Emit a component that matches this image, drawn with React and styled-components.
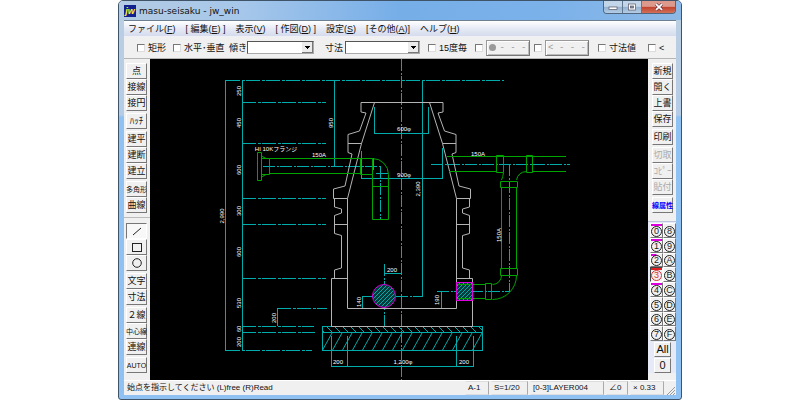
import React, { useState } from "react";
import styled, { createGlobalStyle, css } from "styled-components";

const leftTools = [
    [
        [{ label: "点" }, { label: "接線" }, { label: "接円" }],
        [{ label: "ﾊｯﾁ" }],
        [{ label: "建平" }, { label: "建断" }, { label: "建立" }],
        [{ label: "多角形", small: true }, { label: "曲線" }],
    ],
    [
        [{ label: "線", icon: "line" }, { label: "矩形", icon: "rect" }, { label: "円", icon: "circle" }],
        [{ label: "文字" }, { label: "寸法" }],
        [{ label: "２線" }, { label: "中心線", small: true }, { label: "連線" }],
        [{ label: "AUTO", small: true }],
    ],
];

const rightTools = [
    [{ label: "新規" }, { label: "開く" }, { label: "上書" }, { label: "保存" }],
    [{ label: "印刷" }],
    [{ label: "切取", off: true }, { label: "ｺﾋﾟｰ", off: true }, { label: "貼付", off: true }],
    [{ label: "線属性", small: true, accent: true }],
];

const layers = ["0", "8", "1", "9", "2", "A", "3", "B", "4", "C", "5", "D", "6", "E", "7", "F"];
const layerBars = { 0: "100%", 1: "100%", 2: "50%", 3: "100%", 4: "100%" };

const menus = [
    ["ファイル(", "F", ")"],
    ["[ 編集(", "E", ") ]"],
    ["表示(", "V", ")"],
    ["[ 作図(", "D", ") ]"],
    ["設定(", "S", ")"],
    ["[その他(", "A", ")]"],
    ["ヘルプ(", "H", ")"],
];

const ToolIcon = ({ name }) => (
    <svg width="12" height="12" viewBox="0 0 12 12" fill="none" stroke="#222">
        {name === "line" && <path d="M2 10 10 3" />}
        {name === "rect" && <rect x="1.5" y="2.5" width="9" height="8" />}
        {name === "circle" && <circle cx="6" cy="6" r="4.3" />}
    </svg>
);

const ToolGroups = ({ groups, active, onPick }) => (
    <Groups>
        {groups.map((group, i) => (
            <div key={i}>
                {group.map((t) => (
                    <Tool
                        key={t.label}
                        aria-label={t.label}
                        disabled={t.off}
                        $small={t.small}
                        $accent={t.accent}
                        $active={t.icon && active === t.icon}
                        onClick={() => t.icon && onPick(t.icon)}
                    >
                        {t.icon ? <ToolIcon name={t.icon} /> : t.label}
                    </Tool>
                ))}
            </div>
        ))}
    </Groups>
);

const Combo = ({ id, label, width, labelWidth }) => (
    <>
        <ComboLabel htmlFor={id} $width={labelWidth}>{label}</ComboLabel>
        <ComboBox $width={width}>
            <select id={id}><option></option></select>
            <svg width="11" height="11" viewBox="0 0 11 11" shapeRendering="crispEdges">
                <rect width="11" height="11" fill="#ececec" />
                <path d="M0 10.5H10.5V0" fill="none" stroke="#777" />
                <path d="M3 4h5L5.5 7z" fill="#000" />
            </svg>
        </ComboBox>
    </>
);

// one half of the manhole wall, the other one is mirrored on the centre line
const WALL = [
    "M402 102.5H361V112L366 113 359.5 131 348 134.5V152.5L352 154 345 186 333.5 189V198.5H347.5",
    "M348 143.5H361.5",
    "M374.5 102.5 361.5 143.5 347.5 198.5V308.5H402",
    "M334.5 198.5V207L341.5 209V213L334.5 215.5V233.5L341.5 235.5V268L334.5 270V278.5",
    "M334.5 224.5H347.5M331.5 278.5H347.5M331.5 278.5V326.5H402",
].join("");

// [x, y, text, vertical]
const notes = [
    [241, 91, "250", true],
    [241, 123, "450", true],
    [241, 170, "600", true],
    [241, 211, "300", true],
    [241, 252, "600", true],
    [241, 303, "530", true],
    [241, 329, "60", true],
    [241, 342, "200", true],
    [224, 216, "2,990", true],
    [333, 123, "950", true],
    [276, 318, "200", true],
    [420, 189, "2,390", true],
    [361, 302, "140", true],
    [439, 300, "190", true],
    [501, 235, "150A", true],
    [404, 131, "600φ"],
    [404, 177, "900φ"],
    [276, 151, "HI 10Kフランジ"],
    [319, 157, "150A"],
    [478, 156, "150A"],
    [392, 272, "200"],
    [338, 364, "200"],
    [403, 364, "1,200φ"],
    [464, 364, "200"],
];

const range = (from, to, step) => {
    const out = [];
    for (let v = from; v < to; v += step) out.push(v);
    return out;
};

const Drawing = () => (
    <svg viewBox="150 59 498 321" role="img" aria-label="masu-seisaku">
        <defs>
            <clipPath id="inlet"><circle cx="384" cy="296" r="11" /></clipPath>
            <clipPath id="outlet"><rect x="457" y="283" width="16" height="17" /></clipPath>
            <clipPath id="base"><rect x="323" y="327" width="160" height="24" /></clipPath>
        </defs>

        <g fill="none" stroke="#00acac">
            <g shapeRendering="crispEdges">
                <path d="M225.5 80V350.5M242.5 80V350.5M334.5 80V166M422.5 80V296M277.5 308V326" />
                <path d="M374.5 107V133.5H428.5V107M361.5 151V178.5H442.5V148" />
                <path d="M384 273.5H401M362.5 296V308M441.5 291V308" />
                <path d="M331.5 336V366.5H473V336M347.5 336V366M456.5 336V366" />
                <path d="M322.5 326.5H482.5V350.5H322.5ZM322.5 332.5H482.5" />
                <path
                    strokeDasharray="14 2 3 1"
                    d="M226 80.5H504M242 102.5H326M242 143.5H326M242 198.5H326M242 224.5H326M242 278.5H326M277 308.5H327M242 326.5H314M242 332.5H315M226 350.5H312"
                />
                <path
                    strokeDasharray="12 2 2 1"
                    d="M401.5 59V380M263 166.5H381M380.5 166V219M373.5 158V170M376 173.5H389M384.5 264V326M362 296.5H423M437 291.5H510M509.5 164V292M431 164.5H570"
                />
            </g>
            <g clipPath="url(#base)">
                {range(318, 484, 8).map((x) => <path key={x} d={`M${x} 326l7 7`} />)}
                {range(322, 490, 10).map((x) => <path key={x} d={`M${x} 351l10-18`} />)}
            </g>
            <g clipPath="url(#inlet)">
                <rect x="372" y="284" width="24" height="24" fill="#003c3c" stroke="none" />
                {range(348, 396, 4).map((x) => <path key={x} d={`M${x} 308l24-24`} />)}
            </g>
            <g clipPath="url(#outlet)">
                <rect x="457" y="283" width="16" height="17" fill="#003c3c" stroke="none" />
                {range(438, 474, 4).map((x) => <path key={x} d={`M${x} 301l18-18`} />)}
            </g>
        </g>

        <g fill="none" stroke="#b4b4b4">
            <path d={WALL} />
            <path d={WALL} transform="translate(804 0) scale(-1 1)" />
        </g>

        <g fill="none" stroke="#00a400">
            <path d="M257.5 152.5H261.5V180.5H257.5ZM261.5 156 266 158.5M261.5 177 266 174.5M261.5 158.5H269.5V174.5H261.5" />
            <path d="M269.5 158.5H360.5M269.5 173.5H360.5M360.5 158.5H372.5V174.5H360.5Z" />
            <path d="M372.5 158.5A16 16 0 0 1 388.5 174.5V219.5H372.5V174.5M372.5 186.5H388.5" />
            <path d="M447 156.5H566M449 171.5H497M532 171.5H566" />
            <path d="M496.5 155.5H503.5V172.5H496.5ZM526.5 155.5H532.5V172.5H526.5Z" />
            <path d="M503.5 172.5Q503 177 501.5 180M526.5 171.5Q518 172 516.5 180" />
            <path d="M500.5 181.5H517.5V187.5H500.5ZM500.5 268.5H517.5V275.5H500.5ZM501.5 187.5V268.5M516.5 187.5V268.5" />
            <path d="M516.5 275.5A24 24 0 0 1 492.5 299.5M501.5 275.5A9 9 0 0 1 492.5 284.5" />
            <path d="M456 284.5H485.5M456 298.5H485.5M485.5 283.5H491.5V299.5H485.5Z" />
        </g>

        <g fill="none" stroke="#e000e0">
            <circle cx="384" cy="296" r="11.5" />
            <rect x="456.5" y="282.5" width="16" height="18" />
        </g>

        {notes.map(([x, y, text, vertical], i) => (
            <Note key={i} x={x} y={y} transform={vertical ? `rotate(-90 ${x} ${y})` : undefined}>
                {text}
            </Note>
        ))}
    </svg>
);

const App = () => {
    const [tool, setTool] = useState("line");
    const [layer, setLayer] = useState("3");

    return (
        <>
            <GlobalStyle />
            <Desktop>
                <Window>
                    <TitleBar>
                        <AppIcon>jw</AppIcon>
                        <Title>masu-seisaku - jw_win</Title>
                        <Caption>
                            <CaptionButton $width={19} aria-label="最小化">
                                <svg width="10" height="8" viewBox="0 0 10 8"><rect x="1" y="4" width="8" height="2.5" fill="#fff" stroke="#556" strokeWidth=".7" /></svg>
                            </CaptionButton>
                            <CaptionButton $width={19} aria-label="最大化">
                                <svg width="10" height="8" viewBox="0 0 10 8"><rect x="1.5" y="1" width="7" height="6" fill="#fff" stroke="#556" strokeWidth=".7" /><rect x="3.5" y="3" width="3" height="2" fill="#89a" stroke="#556" strokeWidth=".7" /></svg>
                            </CaptionButton>
                            <CaptionButton $width={33} $close aria-label="閉じる">
                                <svg width="10" height="8" viewBox="0 0 10 8"><path d="M2 1.2 8 6.8M8 1.2 2 6.8" stroke="#634" strokeWidth="3" /><path d="M2 1.2 8 6.8M8 1.2 2 6.8" stroke="#fff" strokeWidth="1.8" /></svg>
                            </CaptionButton>
                        </Caption>
                    </TitleBar>

                    <Client>
                        <MenuBar>
                            {menus.map(([before, key, after]) => (
                                <MenuItem key={key}>{before}<u>{key}</u>{after}</MenuItem>
                            ))}
                        </MenuBar>

                        <ControlBar>
                            <Slot $width={36}><Check><input type="checkbox" />矩形</Check></Slot>
                            <Slot $width={56}><Check><input type="checkbox" />水平･垂直</Check></Slot>
                            <Slot $width={96}><Combo id="slope" label="傾き" labelWidth={18} width={67} /></Slot>
                            <Slot $width={103}><Combo id="size" label="寸法" labelWidth={20} width={75} /></Slot>
                            <Slot $width={47}><Check><input type="checkbox" />15度毎</Check></Slot>
                            <Slot $width={59}>
                                <Check><input type="checkbox" aria-label="●---" /></Check>
                                <EndButton disabled><Dot />- - -</EndButton>
                            </Slot>
                            <Slot $width={64}>
                                <Check><input type="checkbox" aria-label="<---" /></Check>
                                <EndButton disabled>&lt; - - -</EndButton>
                            </Slot>
                            <Slot $width={50}><Check><input type="checkbox" />寸法値</Check></Slot>
                            <Slot $width={24}><Check><input type="checkbox" />&lt;</Check></Slot>
                        </ControlBar>

                        <Work>
                            <Side $width={26} $pad={2}>
                                <ToolGroups groups={leftTools[0]} active={tool} onPick={setTool} />
                                <Rule />
                                <ToolGroups groups={leftTools[1]} active={tool} onPick={setTool} />
                            </Side>
                            <Canvas><Drawing /></Canvas>
                            <Side $width={28} $pad={4}>
                                <ToolGroups groups={rightTools} />
                                <LayerPanel>
                                    <LayerGrid>
                                        {layers.map((l) => (
                                            <Layer key={l} $active={l === layer} $bar={layerBars[l]} onClick={() => setLayer(l)}>
                                                <span>{l}</span>
                                            </Layer>
                                        ))}
                                    </LayerGrid>
                                    <WideTool>All</WideTool>
                                    <WideTool>0</WideTool>
                                </LayerPanel>
                            </Side>
                        </Work>

                        <StatusBar>
                            <StatusText>始点を指示してください (L)free (R)Read</StatusText>
                            <StatusCell $width={24}>A-1</StatusCell>
                            <StatusCell $width={37}>S=1/20</StatusCell>
                            <StatusCell $width={74}>[0-3]LAYER004</StatusCell>
                            <StatusCell $width={22}>∠0</StatusCell>
                            <StatusCell $width={34}>× 0.33</StatusCell>
                            <svg width="9" height="9" viewBox="0 0 9 9" stroke="#999"><path d="M1 9 9 1M4 9 9 4M7 9 9 7" /></svg>
                        </StatusBar>
                    </Client>
                </Window>
            </Desktop>
        </>
    );
};

export default App;

const GlobalStyle = createGlobalStyle`
    * {
        box-sizing: border-box;
    }

    body {
        margin: 0;
        background: #fff;
        color: #111;
        font: 9px/12px "Liberation Sans", "Noto Sans CJK JP", sans-serif;
    }

    button, select {
        margin: 0;
        padding: 0;
        font: inherit;
        color: inherit;
    }

    svg {
        display: block;
        flex: none;
    }
`;

const Desktop = styled.div`
    min-height: 100vh;
    padding: 0 118px;
    display: flex;
`;

const Window = styled.div`
    flex: 1;
    min-width: 0;
    display: flex;
    flex-direction: column;
    padding: 0 5px 4px;
    border: 1px solid #3f5468;
    border-radius: 5px 5px 3px 3px;
    background: linear-gradient(#bccfe2 0, #b4cce6 114px, #8fc1f3 116px, #8fc1f3 100%);
    overflow: hidden;
`;

const TitleBar = styled.header`
    height: 19px;
    margin: 0 -5px;
    padding: 0 5px;
    display: flex;
    align-items: flex-end;
    gap: 3px;
    background: linear-gradient(95deg, #b3cbe3 0, #a6c7ea 22%, #76aee8 50%, #7cb2ea 78%, #8db9e6 100%);
`;

const AppIcon = styled.span`
    width: 12px;
    height: 12px;
    margin-bottom: 3px;
    background: #10208c;
    color: #ffee33;
    font: italic bold 9px/12px "Liberation Sans", sans-serif;
    text-align: center;
`;

const Title = styled.h1`
    flex: 1;
    margin: 0 0 2px;
    font: 9px/14px "DejaVu Sans", sans-serif;
`;

const Caption = styled.div`
    align-self: flex-start;
    display: flex;
    border: 1px solid #50677f;
    border-top: 0;
    border-radius: 0 0 4px 4px;
    overflow: hidden;
`;

const CaptionButton = styled.button`
    width: ${(p) => p.$width}px;
    height: 12px;
    display: flex;
    align-items: center;
    justify-content: center;
    border: 0;
    border-right: 1px solid #60788f;
    background: linear-gradient(#c3d5e8 45%, #93b0cf 50%, #b4cde6);

    ${(p) => p.$close && css`
        border-right: 0;
        background: linear-gradient(#dd9a8c 45%, #c0422c 50%, #d2705a);
    `}
`;

const Client = styled.main`
    flex: 1;
    display: flex;
    flex-direction: column;
    border-top: 1px solid #6d8092;
    background: #f0f0f0;
`;

const MenuBar = styled.nav`
    height: 16px;
    padding: 0 4px;
    display: flex;
    align-items: center;
    gap: 10px;
    background: linear-gradient(#fff, #e6eaf5 50%, #d6dcee);
    border-bottom: 1px solid #eef0f6;
`;

const MenuItem = styled.button`
    border: 0;
    background: none;
    white-space: nowrap;
`;

const ControlBar = styled.div`
    height: 22px;
    padding-left: 13px;
    display: flex;
    align-items: center;
    border-bottom: 1px solid #b5b5b5;
`;

const Slot = styled.div`
    width: ${(p) => p.$width}px;
    flex: none;
    display: flex;
    align-items: center;
    white-space: nowrap;
`;

const Check = styled.label`
    display: flex;
    align-items: center;
    gap: 3px;

    input {
        appearance: none;
        width: 8px;
        height: 8px;
        margin: 0;
        background: #fff;
        border: 1px solid;
        border-color: #777 #ddd #ddd #777;
    }

    input:checked {
        background: #333;
    }
`;

const ComboLabel = styled.label`
    width: ${(p) => p.$width}px;
`;

const ComboBox = styled.div`
    position: relative;
    width: ${(p) => p.$width}px;

    select {
        appearance: none;
        display: block;
        width: 100%;
        height: 13px;
        background: #fff;
        border: 1px solid;
        border-color: #555 #aaa #aaa #555;
        border-radius: 0;
    }

    svg {
        position: absolute;
        top: 1px;
        right: 1px;
        pointer-events: none;
    }
`;

const EndButton = styled.button`
    width: 44px;
    height: 16px;
    margin-left: 3px;
    display: flex;
    align-items: center;
    justify-content: center;
    gap: 3px;
    border: 1px solid;
    border-color: #999 #777 #777 #999;
    box-shadow: inset 1px 1px #fff, inset -1px -1px #bbb;
    background: #f0f0f0;
    color: #999;
    font: 9px "Liberation Mono", monospace;
    word-spacing: normal;
    white-space: nowrap;
`;

const Dot = styled.i`
    width: 7px;
    height: 7px;
    border-radius: 50%;
    background: #999;
`;

const Work = styled.div`
    flex: 1;
    display: flex;
    min-height: 321px;
`;

const Side = styled.aside`
    width: ${(p) => p.$width}px;
    flex: none;
    padding: 4px 0 0 ${(p) => p.$pad}px;
`;

const Canvas = styled.section`
    flex: 1;
    min-width: 0;
    display: flex;
    background: #000;

    svg {
        flex: 1;
        min-width: 0;
    }
`;

const Note = styled.text`
    fill: #fff;
    font: 6px "Liberation Sans", "Noto Sans CJK JP", sans-serif;
    text-anchor: middle;
`;

const Groups = styled.div`
    display: flex;
    flex-direction: column;
    gap: 2px;
`;

const raised = css`
    border: 1px solid;
    border-color: #fff #777 #777 #fff;
    background: #f0f0f0;
`;

const Tool = styled.button`
    ${raised}
    width: 21px;
    height: 16px;
    display: flex;
    align-items: center;
    justify-content: center;
    line-height: 13px;
    white-space: nowrap;
    font-size: ${(p) => (p.$small ? 7 : 9)}px;
    color: ${(p) => (p.$accent ? "#0000ff" : "#111")};
    font-weight: ${(p) => (p.$accent ? "bold" : "normal")};

    &:disabled {
        color: #aaa;
    }

    ${(p) => p.$active && css`
        background: #f8f8f8;
        border-color: #777 #fff #fff #777;
    `}
`;

const Rule = styled.hr`
    height: 1px;
    margin: 4px 0 5px -2px;
    border: 0;
    background: #bbb;
`;

const LayerPanel = styled.div`
    margin: 8px 0 0 -4px;
    padding: 1px 1px 0 2px;
    border-top: 1px solid #bcc6da;
    background: #e6eaf6;
    display: flex;
    flex-direction: column;
    align-items: center;
    gap: 1px;
`;

const LayerGrid = styled.div`
    width: 100%;
    height: 118px;
    display: grid;
    grid-template-columns: 1fr 1fr;
    grid-template-rows: repeat(8, 1fr);
`;

const Layer = styled.button`
    ${raised}
    min-height: 0;
    display: flex;
    align-items: flex-end;
    justify-content: center;
    color: ${(p) => (p.$active ? "#e03030" : "#222")};
    background: ${(p) => p.$bar
        ? `linear-gradient(${p.$active ? "#e02020" : "#e000e0"}, ${p.$active ? "#e02020" : "#e000e0"}) 0 0 / ${p.$bar} 2px no-repeat #f0f0f0`
        : "#f0f0f0"};

    ${(p) => p.$active && css`
        border-color: #444 #fff #fff #444;
    `}

    span {
        width: 11px;
        height: 11px;
        border: 1px solid currentColor;
        border-radius: 50%;
        font-size: 9px;
        line-height: 9px;
        text-align: center;
    }
`;

const WideTool = styled.button`
    ${raised}
    width: 17px;
    height: 15px;
    font-size: 11px;
    line-height: 13px;
`;

const StatusBar = styled.footer`
    height: 15px;
    padding: 0 1px 0 3px;
    display: flex;
    align-items: center;
    gap: 2px;
    border-top: 1px solid #fff;

    svg {
        align-self: flex-end;
    }
`;

const StatusText = styled.span`
    flex: 1;
    white-space: nowrap;
    font-size: 8px;
`;

const StatusCell = styled.span`
    width: ${(p) => p.$width}px;
    padding-left: 2px;
    border: 1px solid;
    border-color: #ddd #aaa #ddd #f0f0f0;
    white-space: nowrap;
    font-size: 8px;
`;
